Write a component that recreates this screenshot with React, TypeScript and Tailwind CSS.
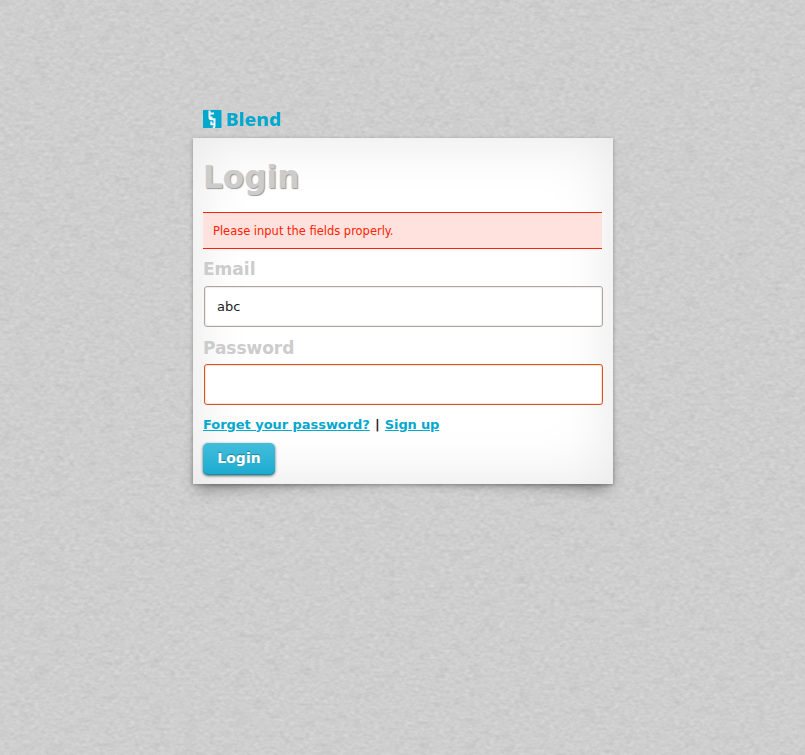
import React from 'react';

function PaperTexture() {
  return (
    <svg className="absolute inset-0 h-full w-full" aria-hidden="true">
      <filter id="grain" x="0" y="0" width="100%" height="100%" colorInterpolationFilters="sRGB">
        <feTurbulence type="fractalNoise" baseFrequency="0.2 0.32" numOctaves="3" seed="21" result="fine" />
        <feColorMatrix in="fine" values="0.08 0.05 0 0 0.746  0.08 0.05 0 0 0.746  0.08 0.05 0 0 0.746  0 0 0 0 1" result="paper" />
        <feTurbulence type="fractalNoise" baseFrequency="0.06 0.12" numOctaves="4" seed="4" />
        <feColorMatrix values="0 0 0 0 0.5  0 0 0 0 0.5  0 0 0 0 0.5  0.22 0 0 0 -0.11" result="mottle" />
        <feMerge>
          <feMergeNode in="paper" />
          <feMergeNode in="mottle" />
        </feMerge>
      </filter>
      <rect width="100%" height="100%" filter="url(#grain)" />
    </svg>
  );
}

function Logo() {
  return (
    <div className="flex h-[18px] items-center gap-1 pl-[10px] text-[#04a8cf]">
      <svg width="18.5" height="18" viewBox="0 0 18.5 18">
        <path d="M0 0h18.500v18H0z" fill="currentColor" />
        <path d="M6.500 .5V7.500q0 1.700 1.700 1.700H11.500V14.300H8.300V11.500M6.500 3.500h4.500M8.500 6.500v3M11.500 14v2q0 1.500-1.800 1.500" fill="none" stroke="#f4f4f4" strokeWidth="2" />
      </svg>
      <span className="origin-left scale-x-[1.04] pb-[2px] font-['Noto_Sans'] text-[18.500px] leading-[17px] font-extrabold">Blend</span>
    </div>
  );
}

function Field({ label, value, type, invalid }: { label: string; value: string; type: string; invalid?: boolean }) {
  return (
    <label className="block">
      <span className={'block h-[37px] text-[17px] leading-[22px] font-bold text-[#ccc] ' + (invalid ? 'pt-[10px] tracking-[-0.05px]' : 'pt-[9px]')}>{label}</span>
      <input
        type={type}
        defaultValue={value}
        className={
          'ml-px block h-[41px] w-[399px] rounded-[3px] border bg-white px-3 text-[13px] text-[#222] outline-none ' +
          (invalid
            ? 'border-[#d8531e] shadow-[inset_0_0_1px_1px_#fae0d4]'
            : 'border-[#aaa7a2] shadow-[inset_0_0_1px_1px_#eeecea]')
        }
      />
    </label>
  );
}

export default function App() {
  return (
    <div className="relative isolate h-[755px] w-full overflow-hidden bg-[#cecece] pt-[110px] font-['DejaVu_Sans',sans-serif]">
      <PaperTexture />
      <main className="relative mx-auto w-[420px] left-[0.5px]">
        <Logo />
        <div className="relative mt-[10px]">
          <div className="absolute bottom-[10px] left-[10px] h-[100px] w-[200px] [transform:skew(-8deg)_rotate(-3deg)] shadow-[0_8px_16px_rgba(0,0,0,0.45)]" />
          <div className="absolute right-[10px] bottom-[10px] h-[100px] w-[200px] [transform:skew(8deg)_rotate(3deg)] shadow-[0_8px_16px_rgba(0,0,0,0.45)]" />
          <section className="relative h-[346px] bg-white px-[10px] shadow-[0_1px_4px_rgba(0,0,0,0.3),inset_0_0_60px_rgba(0,0,0,0.1)]">
            <h1 className="h-[74px] pt-[19px] text-[31.200px] leading-[40px] font-bold text-[#ccc] [text-shadow:1px_1px_1px_#999]">Login</h1>
            <p className="h-[37px] w-[399px] border-y border-[#ff2200] bg-[#ffe1de] px-[10px] font-['DejaVu_Sans_Condensed','DejaVu_Sans',sans-serif] text-[12.750px] leading-[36px] text-[#ff2200] [font-stretch:semi-condensed]">
              Please input the fields properly.
            </p>
            <Field label="Email" value="abc" type="text" />
            <Field label="Password" value="" type="password" invalid />
            <div className="flex h-[38px] items-center pt-px text-[13px] leading-[18px] font-bold tracking-[-0.05px] text-[#222]">
              <a className="text-[#04a8cf] underline" href="#">Forget your password?</a>
              <span className="w-[15px] text-center">|</span>
              <a className="tracking-[-0.150px] text-[#04a8cf] underline" href="#">Sign up</a>
            </div>
            <button className="block h-[32px] w-[72px] rounded-[5px] bg-linear-to-b from-[#42bddb] to-[#18abd0] pb-px text-[14px] leading-[29px] font-bold text-white shadow-[0_1px_3px_rgba(0,0,0,0.6),inset_0_-1px_0_#168cac] [text-shadow:0_-1px_1px_rgba(0,0,0,0.3)]">
              Login
            </button>
          </section>
        </div>
      </main>
    </div>
  );
}
